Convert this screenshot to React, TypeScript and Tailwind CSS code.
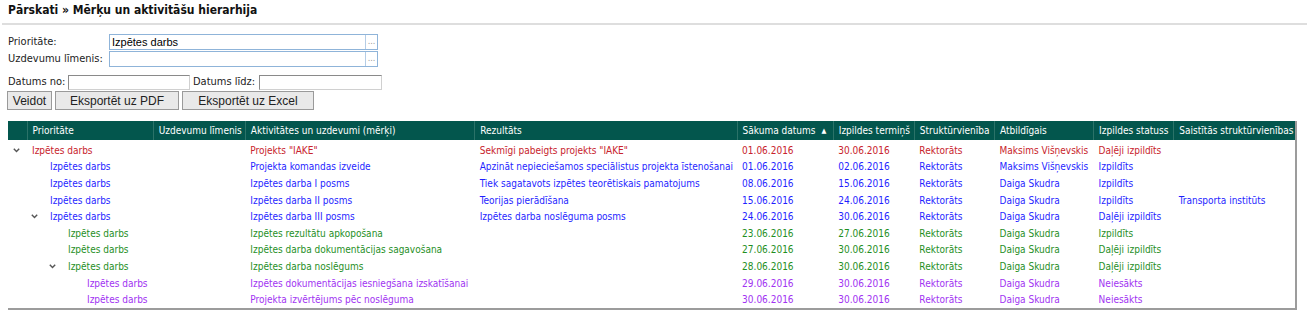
import React from 'react';

type Row = {
  level: number;
  expand?: boolean;
  color: string;
  prio: string;
  act: string;
  res: string;
  start: string;
  end: string;
  unit: string;
  resp: string;
  status: string;
  rel: string;
};

const RED = 'text-[#c8232c]';
const BLUE = 'text-[#1f1fff]';
const GREEN = 'text-[#1f8f1f]';
const PURPLE = 'text-[#a133f2]';

const rows: Row[] = [
  { level: 0, expand: true, color: RED, prio: 'Izpētes darbs', act: 'Projekts "IAKE"', res: 'Sekmīgi pabeigts projekts "IAKE"', start: '01.06.2016', end: '30.06.2016', unit: 'Rektorāts', resp: 'Maksims Višņevskis', status: 'Daļēji izpildīts', rel: '' },
  { level: 1, color: BLUE, prio: 'Izpētes darbs', act: 'Projekta komandas izveide', res: 'Apzināt nepieciešamos speciālistus projekta īstenošanai', start: '01.06.2016', end: '02.06.2016', unit: 'Rektorāts', resp: 'Maksims Višņevskis', status: 'Izpildīts', rel: '' },
  { level: 1, color: BLUE, prio: 'Izpētes darbs', act: 'Izpētes darba I posms', res: 'Tiek sagatavots izpētes teorētiskais pamatojums', start: '08.06.2016', end: '15.06.2016', unit: 'Rektorāts', resp: 'Daiga Skudra', status: 'Izpildīts', rel: '' },
  { level: 1, color: BLUE, prio: 'Izpētes darbs', act: 'Izpētes darba II posms', res: 'Teorijas pierādīšana', start: '15.06.2016', end: '24.06.2016', unit: 'Rektorāts', resp: 'Daiga Skudra', status: 'Izpildīts', rel: 'Transporta institūts' },
  { level: 1, expand: true, color: BLUE, prio: 'Izpētes darbs', act: 'Izpētes darba III posms', res: 'Izpētes darba noslēguma posms', start: '24.06.2016', end: '30.06.2016', unit: 'Rektorāts', resp: 'Daiga Skudra', status: 'Daļēji izpildīts', rel: '' },
  { level: 2, color: GREEN, prio: 'Izpētes darbs', act: 'Izpētes rezultātu apkopošana', res: '', start: '23.06.2016', end: '27.06.2016', unit: 'Rektorāts', resp: 'Daiga Skudra', status: 'Izpildīts', rel: '' },
  { level: 2, color: GREEN, prio: 'Izpētes darbs', act: 'Izpētes darba dokumentācijas sagavošana', res: '', start: '27.06.2016', end: '30.06.2016', unit: 'Rektorāts', resp: 'Daiga Skudra', status: 'Daļēji izpildīts', rel: '' },
  { level: 2, expand: true, color: GREEN, prio: 'Izpētes darbs', act: 'Izpētes darba noslēgums', res: '', start: '28.06.2016', end: '30.06.2016', unit: 'Rektorāts', resp: 'Daiga Skudra', status: 'Daļēji izpildīts', rel: '' },
  { level: 3, color: PURPLE, prio: 'Izpētes darbs', act: 'Izpētes dokumentācijas iesniegšana izskatīšanai', res: '', start: '29.06.2016', end: '30.06.2016', unit: 'Rektorāts', resp: 'Daiga Skudra', status: 'Neiesākts', rel: '' },
  { level: 3, color: PURPLE, prio: 'Izpētes darbs', act: 'Projekta izvērtējums pēc noslēguma', res: '', start: '30.06.2016', end: '30.06.2016', unit: 'Rektorāts', resp: 'Daiga Skudra', status: 'Neiesākts', rel: '' },
];

const indent = ['pl-[5px]', 'pl-[23px]', 'pl-[41px]', 'pl-[60px]'];

function Chevron() {
  return (
    <svg width="7" height="5" viewBox="0 0 7 5" className="inline-block">
      <path d="M0.8 0.8 L3.5 3.6 L6.2 0.8" fill="none" stroke="#555" strokeWidth="1.4" />
    </svg>
  );
}

function PickerInput({ value }: { value?: string }) {
  return (
    <div className="flex h-[16px] w-[269px] border border-[#8fb4d9]">
      <div className="flex-1 px-[2px] leading-[14px] text-black font-['Liberation_Sans',Arial,sans-serif] text-[11px]">{value}</div>
      <div className="w-[12px] border-l border-[#b5cde6] text-[9px] leading-[12px] text-center text-[#999]">...</div>
    </div>
  );
}

const headers = [
  'Prioritāte',
  'Uzdevumu līmenis',
  'Aktivitātes un uzdevumi (mērķi)',
  'Rezultāts',
  'Sākuma datums',
  'Izpildes termiņš',
  'Struktūrvienība',
  'Atbildīgais',
  'Izpildes statuss',
  'Saistītās struktūrvienības',
];

const widths = ['w-[19px]', 'w-[126px]', 'w-[92px]', 'w-[229px]', 'w-[262px]', 'w-[96px]', 'w-[81px]', 'w-[80px]', 'w-[99px]', 'w-[80px]', 'w-[121px]'];

export default function App() {
  return (
    <div className="w-[1307px] h-[314px] overflow-hidden bg-white text-[10px] text-[#222] font-['DejaVu_Sans_Condensed','DejaVu_Sans',Tahoma,sans-serif]">
      <div className="px-[8px] pt-[1px]">
        <h1 className="text-[12px] font-bold leading-[18px] text-[#111]">Pārskati » Mērķu un aktivitāšu hierarhija</h1>
      </div>
      <div className="mt-[4px] ml-[2px] h-[2px] bg-[#dedede]" />

      <div className="px-[8px] pt-[9px] text-[11px] text-[#222] whitespace-nowrap">
        <div className="flex items-center h-[16px]">
          <span className="w-[101px]">Prioritāte:</span>
          <PickerInput value="Izpētes darbs" />
        </div>
        <div className="flex items-center h-[16px] mt-[1px]">
          <span className="w-[101px]">Uzdevumu līmenis:</span>
          <PickerInput />
        </div>
        <div className="flex items-center mt-[8px] h-[15px]">
          <span className="w-[60px]">Datums no:</span>
          <div className="w-[122px] h-[15px] border border-[#8a8a8a] border-r-[#d0d0d0] border-b-[#d0d0d0]" />
          <span className="ml-[3px] w-[66px]">Datums līdz:</span>
          <div className="w-[123px] h-[15px] border border-[#8a8a8a] border-r-[#d0d0d0] border-b-[#d0d0d0]" />
        </div>
        <div className="flex gap-[3px] mt-[1px] -ml-[1px] font-['Liberation_Sans',Arial,sans-serif]">
          <button className="h-[19px] w-[45px] bg-[#e9e9e9] border border-[#9a9a9a] text-[12px] leading-[16px]">Veidot</button>
          <button className="h-[19px] w-[124px] bg-[#e9e9e9] border border-[#9a9a9a] text-[12px] leading-[16px]">Eksportēt uz PDF</button>
          <button className="h-[19px] w-[132px] bg-[#e9e9e9] border border-[#9a9a9a] text-[12px] leading-[16px]">Eksportēt uz Excel</button>
        </div>
      </div>

      <div className="ml-[8px] mt-[11px] w-[1289px] border-r-2 border-b-2 border-[#9c9c9c]">
        <table className="w-full table-fixed border-collapse">
          <colgroup>
            {widths.map((w, i) => (
              <col key={i} className={w} />
            ))}
          </colgroup>
          <thead>
            <tr className="bg-[#03564d] text-white h-[19px] text-[10px]">
              <th className="border-r border-[#2b7268]" />
              {headers.map((h, i) => (
                <th key={h} className={`text-left font-normal px-[5px] whitespace-nowrap overflow-hidden ${i < headers.length - 1 ? 'border-r border-[#2b7268]' : ''}`}>
                  {h === 'Sākuma datums' ? (
                    <span>
                      {h}
                      <span className="ml-[6px] text-[7px] align-middle">▲</span>
                    </span>
                  ) : (
                    h
                  )}
                </th>
              ))}
            </tr>
          </thead>
          <tbody>
            <tr className="h-[2px]"><td colSpan={11} /></tr>
            {rows.map((r, i) => (
              <tr key={i} className={`h-[16.6px] ${r.color}`}>
                <td colSpan={2} className="p-0 whitespace-nowrap">
                  <div className={`flex items-center ${indent[r.level]}`}>
                    <span className="w-[19px] flex items-center">{r.expand ? <Chevron /> : null}</span>
                    <span>{r.prio}</span>
                  </div>
                </td>
                <td className="px-[5px]" />
                <td className="px-[5px] whitespace-nowrap overflow-hidden">{r.act}</td>
                <td className="px-[5px] whitespace-nowrap overflow-hidden">{r.res}</td>
                <td className="px-[5px] whitespace-nowrap">{r.start}</td>
                <td className="px-[5px] whitespace-nowrap">{r.end}</td>
                <td className="px-[5px] whitespace-nowrap">{r.unit}</td>
                <td className="px-[5px] whitespace-nowrap overflow-hidden">{r.resp}</td>
                <td className="px-[5px] whitespace-nowrap">{r.status}</td>
                <td className="px-[5px] whitespace-nowrap overflow-hidden">{r.rel}</td>
              </tr>
            ))}
          </tbody>
        </table>
      </div>
    </div>
  );
}
